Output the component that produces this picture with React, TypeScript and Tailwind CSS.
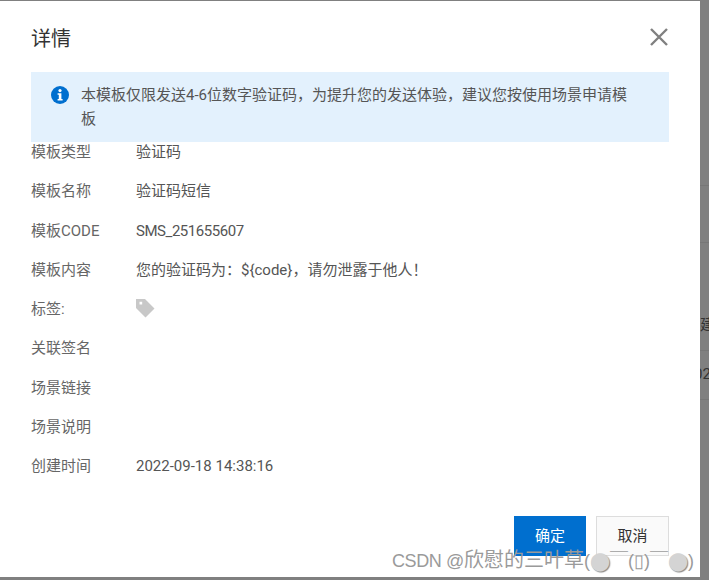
import React from "react";

const rows: { label: string; value?: string; tag?: boolean; tight?: boolean }[] = [
  { label: "模板类型", value: "验证码" },
  { label: "模板名称", value: "验证码短信" },
  { label: "模板CODE", value: "SMS_251655607", tight: true },
  { label: "模板内容", value: "您的验证码为：${code}，请勿泄露于他人！" },
  { label: "标签:", tag: true },
  { label: "关联签名" },
  { label: "场景链接" },
  { label: "场景说明" },
  { label: "创建时间", value: "2022-09-18 14:38:16" },
];

const TagIcon = () => (
  <svg width="20" height="20" viewBox="0 0 20 20" className="block ml-[-1px] mt-[-1px]">
    <path
      fillRule="evenodd"
      fill="#c8c8c8"
      d="M1 1 H10 L19.5 10.5 L10.5 19.5 L1 10 Z M4.5 3.8 H7.2 V6.5 H4.5 Z"
    />
  </svg>
);

export default function App() {
  return (
    <div className="relative w-[709px] h-[580px] overflow-hidden bg-[#808080] font-['Roboto','Noto_Sans_CJK_SC',sans-serif] pt-px">
      {/* Page behind the overlay */}
      <div className="absolute right-0 top-0 w-[9px] h-full overflow-hidden">
        <div className="absolute top-[185px] w-full h-px bg-[#777]" />
        <div className="absolute top-[242px] w-full h-px bg-[#777]" />
        <div className="absolute top-[350px] w-full h-px bg-[#777]" />
        <div className="absolute top-[399px] w-full h-px bg-[#777]" />
        <span className="absolute top-[315px] left-0 text-[15px] leading-5 whitespace-nowrap text-[#333]">建</span>
        <span className="absolute top-[364px] left-[-6px] text-[15px] leading-5 whitespace-nowrap text-[#333]">02</span>
      </div>

      {/* Dialog */}
      <div className="relative w-[700px] h-[576px] bg-white flex flex-col px-[31px]">
        <div className="flex items-center justify-between h-[71px] pt-[4px]">
          <h2 className="text-xl leading-7 text-[#333]">详情</h2>
          <svg width="18" height="18" viewBox="0 0 18 18" className="mr-[1px] mt-[-3px]">
            <path d="M1 1 L17 17 M17 1 L1 17" stroke="#808080" strokeWidth="2.4" fill="none" />
          </svg>
        </div>

        <div className="flex h-[70px] bg-[#e3f1fd] pl-5 pr-[36px] pt-[11px]">
          <svg width="18" height="18" viewBox="0 0 18 18" className="shrink-0 mt-[3px]">
            <circle cx="9" cy="9" r="9" fill="#006fcf" />
            <circle cx="9" cy="4.6" r="1.6" fill="#fff" />
            <path d="M6.6 7.2 H10.4 V13 H11.6 V14.6 H6.6 V13 H7.8 V8.8 H6.6 Z" fill="#fff" />
          </svg>
          <p className="ml-3 text-[15px] leading-6 text-[#555]">
            本模板仅限发送4-6位数字验证码，为提升您的发送体验，建议您按使用场景申请模板
          </p>
        </div>

        <div className="flex flex-col">
          {rows.map((row) => (
            <div key={row.label} className="flex h-[39.25px] items-start text-[15px] leading-5">
              <span className="w-[105px] text-[#666]">{row.label}</span>
              {row.value && (
                <span className={row.tight ? "text-[#555] tracking-[-0.45px]" : "text-[#555]"}>{row.value}</span>
              )}
              {row.tag && <TagIcon />}
            </div>
          ))}
        </div>

        <div className="absolute left-[514px] top-[515px] flex gap-[10px]">
          <button className="w-[72px] h-10 bg-[#006fcf] text-white text-[15px]">确定</button>
          <button className="w-[73px] h-10 bg-[#fafafa] border border-[#dddddd] text-[#333] text-[15px]">取消</button>
        </div>
      </div>

      {/* Watermark */}
      <div className="absolute left-[392px] top-[548px] text-lg leading-6 whitespace-nowrap text-[#9a9a9a] font-['Liberation_Sans','Noto_Sans_CJK_SC',sans-serif]">
        <span className="tracking-[-0.4px]">CSDN @</span>
        <span className="text-[20px]">欣慰的三叶草</span>(
        <span className="text-[#d4d4d4] [text-shadow:1px_1px_1px_#888]">⬤</span>
        ￣(▯)￣
        <span className="text-[#d4d4d4] [text-shadow:1px_1px_1px_#888]">⬤</span>)
      </div>
    </div>
  );
}
